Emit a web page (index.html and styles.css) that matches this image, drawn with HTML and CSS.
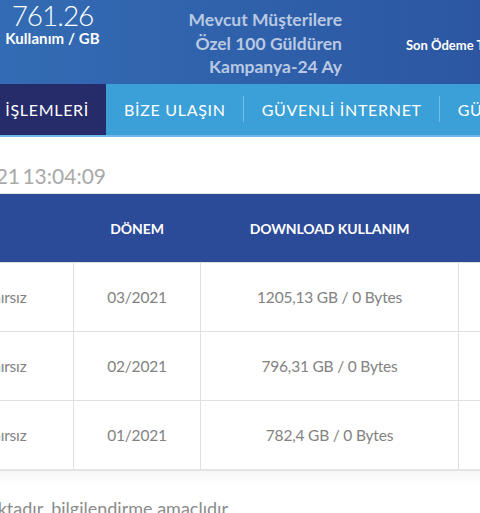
FILE: index.html
```html
<!DOCTYPE html>
<html lang="tr">
<head>
<meta charset="utf-8">
<title>Kullanım</title>
<link rel="stylesheet" href="styles.css">
</head>
<body>
<div class="page">
  <header class="top">
    <div class="usage">
      <div class="usage-num">761.26</div>
      <div class="usage-label">Kullanım / GB</div>
    </div>
    <div class="promo">Mevcut Müşterilere<br>Özel 100 Güldüren<br>Kampanya-24 Ay</div>
    <div class="due">Son Ödeme Tarihi</div>
  </header>
  <nav class="nav">
    <div class="nav-item active"><span>ONLİNE İŞLEMLERİ</span></div>
    <div class="nav-item">BİZE ULAŞIN</div>
    <div class="nav-item sep">GÜVENLİ İNTERNET</div>
    <div class="nav-item sep">GÜNCEL KAMPANYALAR</div>
  </nav>
  <main class="content">
    <div class="date-row"><span>Son Güncelleme: 30.03.2021 13:04:09</span></div>
    <div class="table-wrap">
      <table class="usage-table">
        <colgroup>
          <col class="c-quota"><col class="c-period"><col class="c-down"><col class="c-up">
        </colgroup>
        <thead>
          <tr><th></th><th>DÖNEM</th><th>DOWNLOAD KULLANIM</th><th>UPLOAD KULLANIM</th></tr>
        </thead>
        <tbody>
          <tr><td>Sınırsız</td><td>03/2021</td><td>1205,13 GB / 0 Bytes</td><td>0 Bytes</td></tr>
          <tr><td>Sınırsız</td><td>02/2021</td><td>796,31 GB / 0 Bytes</td><td>0 Bytes</td></tr>
          <tr><td>Sınırsız</td><td>01/2021</td><td>782,4 GB / 0 Bytes</td><td>0 Bytes</td></tr>
        </tbody>
      </table>
    </div>
    <div class="note-row"><span>Bu bilgiler yaklaşık olarak sunulmaktadır, bilgilendirme amaçlıdır</span></div>
  </main>
</div>
</body>
</html>
```
FILE: styles.css
```css
* { box-sizing: border-box; }
html, body { margin: 0; padding: 0; }
body {
  font-family: Lato, "Open Sans", sans-serif;
  background: #fff;
  overflow: hidden;
  width: 480px;
  height: 513px;
}
.page { width: 480px; height: 513px; overflow: hidden; }

.top {
  height: 84px;
  display: flex;
  align-items: flex-start;
  background: linear-gradient(90deg, #336cb4 0%, #2c56a2 100%);
  color: #fff;
}
.usage {
  width: 105px;
  flex-shrink: 0;
  text-align: center;
}
.usage-num {
  font-weight: 300;
  font-size: 28px;
  line-height: 30px;
  letter-spacing: -1px;
}
.usage-label {
  font-weight: 700;
  font-size: 15px;
  line-height: 17px;
  letter-spacing: 0.1px;
}
.promo {
  width: 237px;
  flex-shrink: 0;
  text-align: right;
  color: #b9c9e2;
  font-weight: 700;
  font-size: 17.5px;
  line-height: 23.5px;
  padding-top: 8px;
}
.due {
  margin-left: 64px;
  flex-shrink: 0;
  padding-top: 37px;
  font-weight: 700;
  font-size: 13px;
  white-space: nowrap;
}

.nav {
  display: flex;
  height: 53px;
  background: #3b9fd8;
  border-bottom: 2px solid #6db8e6;
  color: #fff;
  white-space: nowrap;
}
.nav-item {
  display: flex;
  align-items: center;
  flex-shrink: 0;
  padding: 0 17px 0 18px;
  font-size: 16px;
  font-weight: 400;
  letter-spacing: 0.7px;
}
.nav-item.active {
  width: 106px;
  justify-content: flex-end;
  background: #262b6a;
  padding: 0 17px 0 0;
  word-spacing: 8px;
}
.nav-item.sep {
  position: relative;
  border-left: 1px solid transparent;
}
.nav-item.sep::before {
  content: "";
  position: absolute;
  left: -1px;
  top: 12px;
  height: 26px;
  width: 1px;
  background: #74bde8;
}

.content { padding-top: 24px; }
.date-row {
  display: flex;
  justify-content: flex-end;
  width: 106px;
  white-space: nowrap;
  font-size: 21px;
  line-height: 30px;
  color: #a9a9a9;
  word-spacing: -3px;
}
.table-wrap {
  margin-top: 2px;
  margin-left: -67px;
  width: 710px;
  box-shadow: 0 6px 10px rgba(0,0,0,0.04);
}
.usage-table {
  border-collapse: collapse;
  table-layout: fixed;
  width: 710px;
  border-top: 1px solid #e3e3e3;
  border-bottom: 2px solid #e3e3e3;
}
.c-quota { width: 140px; }
.c-period { width: 127px; }
.c-down { width: 258px; }
.c-up { width: 185px; }
.usage-table th {
  height: 69px;
  background: #2b4a98;
  color: #fff;
  font-size: 14px;
  font-weight: 700;
  text-align: center;
  padding: 0;
  letter-spacing: -0.1px;
}
.usage-table td {
  height: 69px;
  border: 1px solid #e0e0e0;
  text-align: center;
  color: #828282;
  font-size: 15.5px;
  letter-spacing: -0.2px;
  padding: 0;
}
.note-row {
  display: flex;
  justify-content: flex-end;
  width: 228px;
  white-space: nowrap;
  margin-top: 26px;
  font-size: 18px;
  line-height: 22px;
  color: #8b8b8b;
}
```
